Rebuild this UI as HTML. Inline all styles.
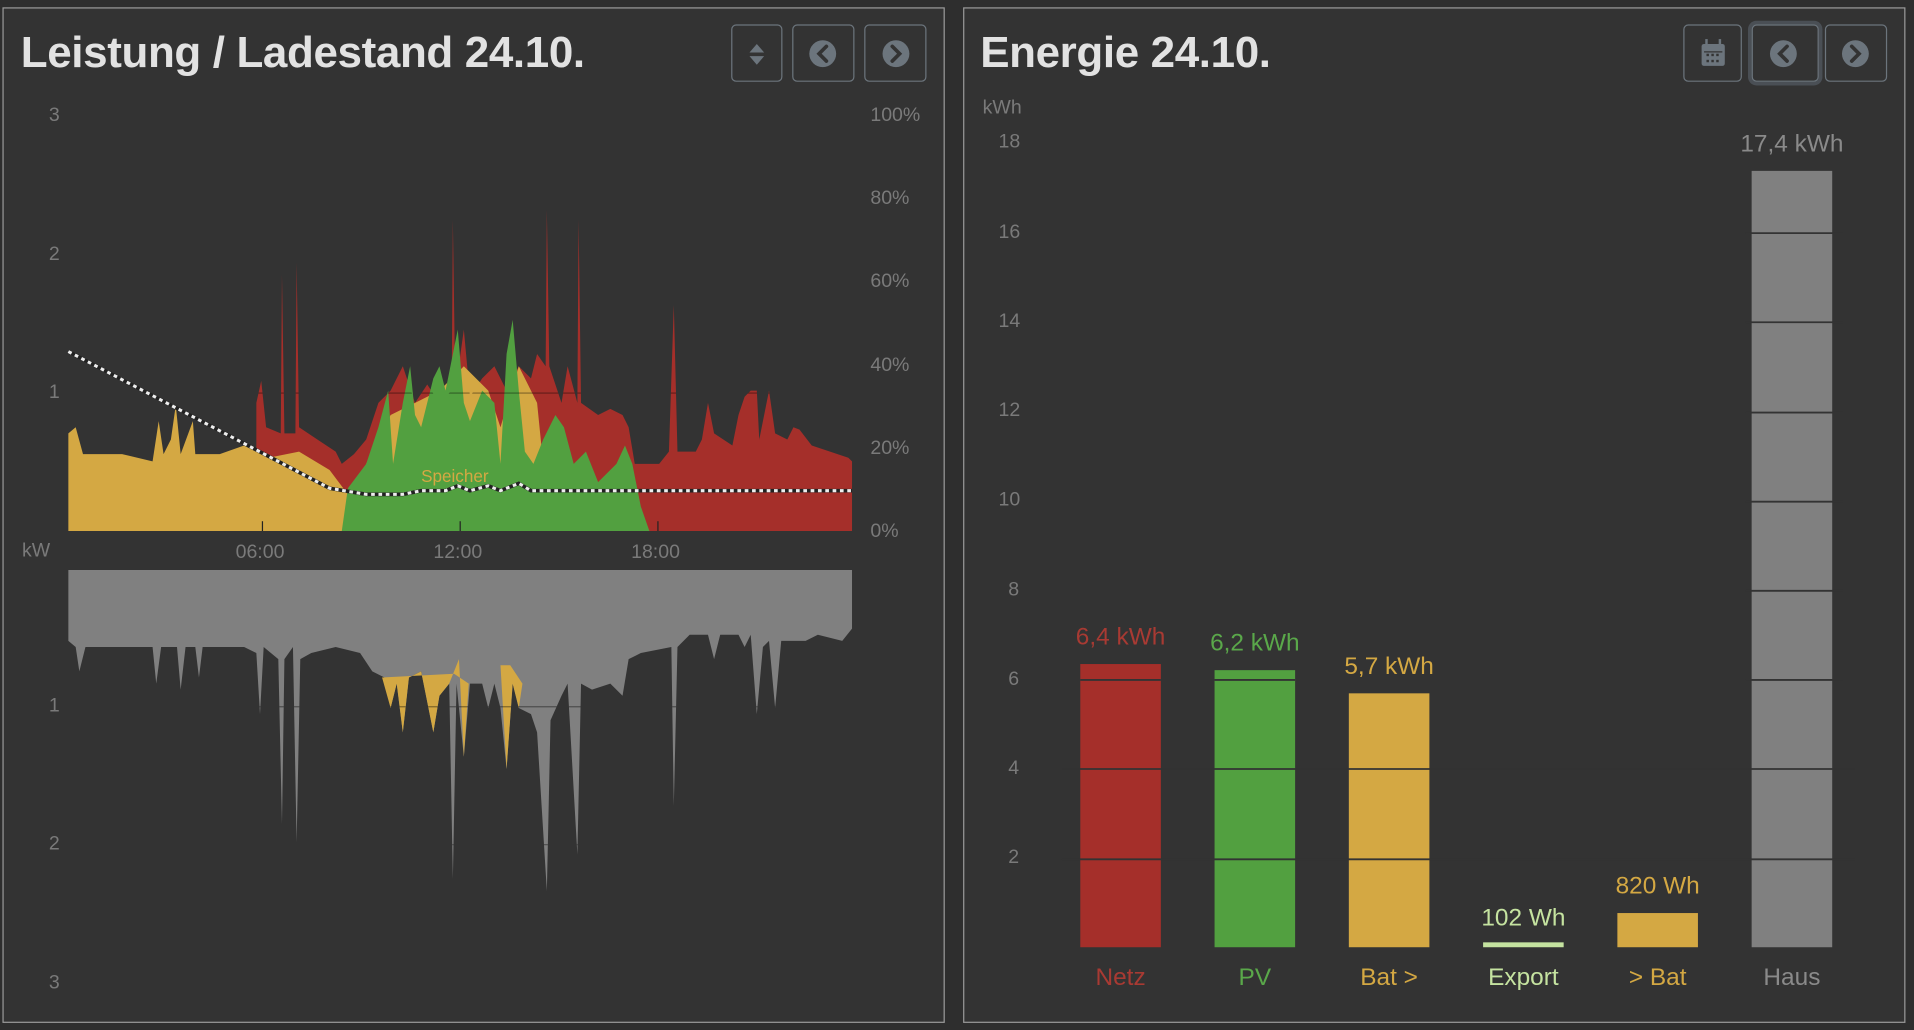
<!DOCTYPE html>
<html><head><meta charset="utf-8"><style>
html,body{margin:0;padding:0;background:#2e2e2e;overflow:hidden;width:1914px;height:1030px}
#w{position:absolute;left:0;top:0;width:1568px;height:844px;transform:scale(1.22066);transform-origin:0 0;font-family:"Liberation Sans",sans-serif}
.p{position:absolute;top:6px;height:830px;background:#333;border:1px solid #9a9a9a}
.t{position:absolute;top:22px;font-size:36px;font-weight:bold;color:#e2e2e2;letter-spacing:-0.3px;white-space:nowrap}
.b{position:absolute;top:20px;height:47px;border:1px solid #6c757d;border-radius:4px;box-sizing:border-box}
.l{position:absolute;font-size:16px;color:#7a7a7a}
</style></head><body><div id="w">
<div class="p" style="left:2px;width:770px"></div>
<div class="p" style="left:789px;width:770px"></div>
<div class="t" style="left:17px">Leistung / Ladestand 24.10.</div>
<div class="t" style="left:803px">Energie 24.10.</div>
<div class="b" style="left:599px;width:42px"></div>
<div class="b" style="left:649px;width:51px"></div>
<div class="b" style="left:708px;width:51px"></div>
<div class="b" style="left:1379px;width:48px"></div>
<div class="b" style="left:1435px;width:55px;box-shadow:0 0 0 3px #4a4f55"></div>
<div class="b" style="left:1495px;width:51px"></div>
<svg style="position:absolute;left:0;top:0" width="1568" height="844">
<defs>
<clipPath id="cu"><path d="M210 435 L210 330 L214 312 L218 350 L230 355 L231 225 L233 355 L242 355 L243 215 L245 350 L260 360 L275 370 L280 380 L290 372 L300 360 L310 330 L320 320 L330 300 L340 330 L350 315 L360 330 L370 320 L371 180 L373 320 L380 270 L385 325 L395 310 L405 300 L415 320 L425 300 L435 310 L440 290 L447 300 L448 172 L450 300 L460 330 L465 300 L473 330 L474 180 L476 330 L490 340 L500 335 L510 340 L515 350 L520 380 L540 380 L548 370 L552 250 L555 370 L570 370 L575 360 L580 330 L585 355 L600 365 L605 340 L610 325 L615 320 L620 320 L622 360 L630 320 L635 355 L645 360 L650 350 L655 352 L665 365 L680 370 L695 375 L698 378 L698 435Z"/></clipPath>
<clipPath id="cl"><path d="M56 467 L698 467 L698 515 L690 525 L670 520 L660 525 L640 525 L635 580 L630 525 L625 530 L620 585 L615 520 L610 530 L605 520 L590 520 L585 540 L580 520 L565 520 L555 530 L552 660 L550 530 L525 535 L515 540 L510 570 L500 560 L485 565 L476 560 L473 700 L465 560 L460 570 L451 590 L448 730 L440 600 L435 585 L425 580 L420 560 L415 630 L410 580 L405 560 L400 580 L395 560 L385 560 L380 620 L374 560 L371 720 L368 560 L360 570 L355 600 L345 550 L335 555 L330 600 L325 560 L320 580 L315 555 L305 550 L295 535 L275 530 L255 535 L246 540 L243 690 L240 530 L233 540 L231 675 L228 540 L216 530 L213 585 L210 535 L200 530 L166 530 L163 555 L160 530 L152 530 L148 565 L145 530 L132 530 L128 560 L125 530 L70 530 L65 550 L62 530 L56 525Z"/></clipPath>
</defs>
<g fill="#6c757d">
<path d="M620 36 L626 43 L614 43Z M614 46 L626 46 L620 53Z"/>
<circle cx="674" cy="44" r="11"/><circle cx="734" cy="44" r="11"/>
<circle cx="1461" cy="44" r="11"/><circle cx="1520" cy="44" r="11"/>
<rect x="1394" y="36" width="19" height="18" rx="2"/>
<rect x="1397" y="32" width="2" height="5"/><rect x="1408" y="32" width="2" height="5"/>
</g>
<g stroke="#333" stroke-width="3" fill="none" stroke-linecap="round">
<path d="M677 38 L671 44 L677 50"/><path d="M731 38 L737 44 L731 50"/>
<path d="M1464 38 L1458 44 L1464 50"/><path d="M1517 38 L1523 44 L1517 50"/>
</g>
<g fill="#333"><rect x="1396" y="42" width="15" height="1"/><rect x="1398" y="44" width="2" height="2"/><rect x="1402" y="44" width="2" height="2"/><rect x="1406" y="44" width="2" height="2"/><rect x="1398" y="49" width="2" height="2"/><rect x="1402" y="49" width="2" height="2"/><rect x="1406" y="49" width="2" height="2"/></g>

<path fill="#a52f2a" d="M210 435 L210 330 L214 312 L218 350 L230 355 L231 225 L233 355 L242 355 L243 215 L245 350 L260 360 L275 370 L280 380 L290 372 L300 360 L310 330 L320 320 L330 300 L340 330 L350 315 L360 330 L370 320 L371 180 L373 320 L380 270 L385 325 L395 310 L405 300 L415 320 L425 300 L435 310 L440 290 L447 300 L448 172 L450 300 L460 330 L465 300 L473 330 L474 180 L476 330 L490 340 L500 335 L510 340 L515 350 L520 380 L540 380 L548 370 L552 250 L555 370 L570 370 L575 360 L580 330 L585 355 L600 365 L605 340 L610 325 L615 320 L620 320 L622 360 L630 320 L635 355 L645 360 L650 350 L655 352 L665 365 L680 370 L695 375 L698 378 L698 435Z"/>
<path fill="#d4a843" d="M56 435 L56 355 L62 350 L68 372 L100 372 L125 378 L130 345 L134 372 L140 360 L144 332 L148 372 L158 345 L160 372 L180 372 L200 365 L220 375 L245 370 L270 385 L285 405 L290 435Z M290 435 L300 380 L320 340 L340 330 L360 320 L380 300 L400 320 L410 350 L425 300 L440 330 L445 380 L450 435Z"/>
<path fill="#52a040" d="M280 435 L285 400 L300 380 L310 350 L318 320 L322 380 L330 330 L336 300 L340 340 L345 350 L355 310 L360 300 L365 320 L375 270 L380 330 L385 345 L395 320 L405 330 L410 380 L415 290 L420 262 L425 320 L430 370 L437 380 L445 360 L455 340 L462 350 L470 380 L480 370 L490 395 L505 380 L512 365 L518 380 L525 415 L532 435Z"/>
<line x1="56" y1="322" x2="698" y2="322" stroke="rgba(0,0,0,.4)" clip-path="url(#cu)"/>
<g stroke="#222" stroke-width="1"><line x1="215" y1="427" x2="215" y2="435"/><line x1="377" y1="427" x2="377" y2="435"/><line x1="539" y1="427" x2="539" y2="435"/></g>
<path d="M56 288 L270 400 L300 405 L330 405 L345 402 L365 402 L375 398 L385 402 L400 398 L410 402 L425 396 L435 402 L698 402" fill="none" stroke="#222" stroke-width="3"/>
<path d="M56 288 L270 400 L300 405 L330 405 L345 402 L365 402 L375 398 L385 402 L400 398 L410 402 L425 396 L435 402 L698 402" fill="none" stroke="#eee" stroke-width="2.5" stroke-dasharray="3 3"/>
<text x="345" y="395" font-size="14" fill="#d4a843" font-family="Liberation Sans">Speicher</text>

<path fill="#808080" d="M56 467 L698 467 L698 515 L690 525 L670 520 L660 525 L640 525 L635 580 L630 525 L625 530 L620 585 L615 520 L610 530 L605 520 L590 520 L585 540 L580 520 L565 520 L555 530 L552 660 L550 530 L525 535 L515 540 L510 570 L500 560 L485 565 L476 560 L473 700 L465 560 L460 570 L451 590 L448 730 L440 600 L435 585 L425 580 L420 560 L415 630 L410 580 L405 560 L400 580 L395 560 L385 560 L380 620 L374 560 L371 720 L368 560 L360 570 L355 600 L345 550 L335 555 L330 600 L325 560 L320 580 L315 555 L305 550 L295 535 L275 530 L255 535 L246 540 L243 690 L240 530 L233 540 L231 675 L228 540 L216 530 L213 585 L210 535 L200 530 L166 530 L163 555 L160 530 L152 530 L148 565 L145 530 L132 530 L128 560 L125 530 L70 530 L65 550 L62 530 L56 525Z"/>
<path fill="#d4a843" d="M313 555 L320 580 L325 560 L330 600 L335 555 L345 550 L355 600 L360 570 L368 560 L372 550 L376 540 L380 620 L384 560 L372 552 Z M410 545 L415 630 L420 560 L425 580 L428 560 L418 545Z"/>
<g stroke="rgba(0,0,0,.4)" clip-path="url(#cl)"><line x1="56" y1="579" x2="698" y2="579"/><line x1="56" y1="692" x2="698" y2="692"/></g>
</svg>
<div class="l" style="left:40px;top:86px">3</div>
<div class="l" style="left:40px;top:200px">2</div>
<div class="l" style="left:40px;top:313px">1</div>
<div class="l" style="left:713px;top:86px">100%</div>
<div class="l" style="left:713px;top:154px">80%</div>
<div class="l" style="left:713px;top:222px">60%</div>
<div class="l" style="left:713px;top:291px">40%</div>
<div class="l" style="left:713px;top:359px">20%</div>
<div class="l" style="left:713px;top:427px">0%</div>
<div class="l" style="left:18px;top:443px">kW</div>
<div class="l" style="left:193px;top:444px">06:00</div>
<div class="l" style="left:355px;top:444px">12:00</div>
<div class="l" style="left:517px;top:444px">18:00</div>
<div class="l" style="left:40px;top:570px">1</div>
<div class="l" style="left:40px;top:683px">2</div>
<div class="l" style="left:40px;top:797px">3</div>

<div class="l" style="left:805px;top:80px">kWh</div>
<div class="l" style="left:818px;top:108px">18</div>
<div class="l" style="left:818px;top:182px">16</div>
<div class="l" style="left:818px;top:255px">14</div>
<div class="l" style="left:818px;top:328px">12</div>
<div class="l" style="left:818px;top:401px">10</div>
<div class="l" style="left:826px;top:475px">8</div>
<div class="l" style="left:826px;top:548px">6</div>
<div class="l" style="left:826px;top:621px">4</div>
<div class="l" style="left:826px;top:694px">2</div>

<svg style="position:absolute;left:0;top:0" width="1568" height="844">
<rect x="885" y="544" width="66" height="232" fill="#a52f2a"/>
<rect x="995" y="549" width="66" height="227" fill="#52a040"/>
<rect x="1105" y="568" width="66" height="208" fill="#d4a843"/>
<rect x="1215" y="772" width="66" height="4" fill="#c5e3a0"/>
<rect x="1325" y="748" width="66" height="28" fill="#d4a843"/>
<rect x="1435" y="140" width="66" height="636" fill="#808080"/>
<g stroke="#333" stroke-width="1.5">
<line x1="885" y1="557" x2="951" y2="557"/><line x1="995" y1="557" x2="1061" y2="557"/>
<line x1="870" y1="630" x2="1520" y2="630"/><line x1="870" y1="704" x2="1520" y2="704"/>
<line x1="1430" y1="557" x2="1510" y2="557"/>
<line x1="1430" y1="191" x2="1510" y2="191"/><line x1="1430" y1="264" x2="1510" y2="264"/><line x1="1430" y1="338" x2="1510" y2="338"/><line x1="1430" y1="411" x2="1510" y2="411"/><line x1="1430" y1="484" x2="1510" y2="484"/>
</g>
<g font-family="Liberation Sans" font-size="20" text-anchor="middle">
<text x="918" y="528" fill="#a83a33">6,4 kWh</text>
<text x="1028" y="533" fill="#5aa84a">6,2 kWh</text>
<text x="1138" y="552" fill="#d4a843">5,7 kWh</text>
<text x="1248" y="758" fill="#c5e3a0">102 Wh</text>
<text x="1358" y="732" fill="#d4a843">820 Wh</text>
<text x="1468" y="124" fill="#8a8a8a">17,4 kWh</text>
<text x="918" y="807" fill="#a83a33">Netz</text>
<text x="1028" y="807" fill="#5aa84a">PV</text>
<text x="1138" y="807" fill="#d4a843">Bat &gt;</text>
<text x="1248" y="807" fill="#c5e3a0">Export</text>
<text x="1358" y="807" fill="#d4a843">&gt; Bat</text>
<text x="1468" y="807" fill="#8a8a8a">Haus</text>
</g>
</svg>
</div></body></html>
